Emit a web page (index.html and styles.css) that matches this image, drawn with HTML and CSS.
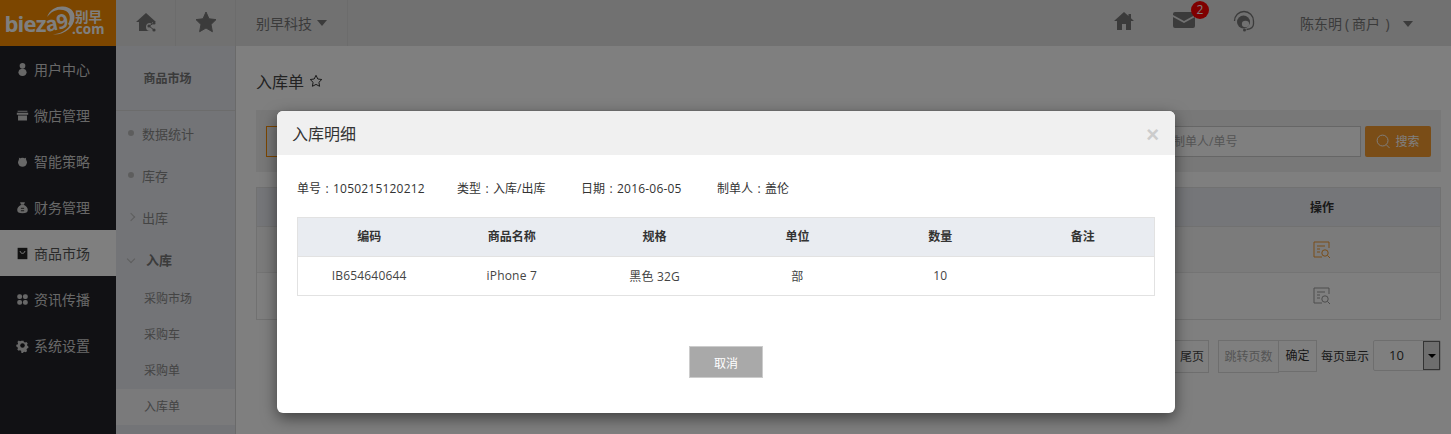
FILE: index.html
```html
<!DOCTYPE html>
<html lang="zh-CN">
<head>
<meta charset="utf-8">
<title>入库单</title>
<link rel="stylesheet" href="styles.css">
</head>
<body>
<div class="app">
  <aside class="nav">
    <div class="logo">
      <svg width="116" height="46" viewBox="0 0 116 46">
        <text x="4.500" y="32" class="logo-main">biez</text>
        <path d="M47 17C50 9 57 6 63 6.500C70 7 75 11 74.500 18C74 27 65 35 53 34.500C60 33.500 66 31 69.500 25.500L68 24C70.500 20 71 14 66 11C60 8 52 10 47 17Z" fill="#fff"/>
        <text x="47" y="32" class="logo-a9" transform="rotate(-12 47 32)">a9</text>
        <text x="75" y="22" class="logo-cn">别早</text>
        <text x="72" y="33.500" class="logo-com">.com</text>
      </svg>
    </div>
    <a class="nav-item"><svg class="nav-ico" viewBox="0 0 16 16"><circle cx="8" cy="3.500" r="3.500"/><path d="M3 11.500C3 8 5.500 7 8 7s5 1 5 4.500c0 3-2 4.500-5 4.500s-5-1.500-5-4.500z"/></svg>用户中心</a>
    <a class="nav-item"><svg class="nav-ico" viewBox="0 0 16 16"><path d="M2 2h12v1.500H2zM1 4.500h14V7H1zM2.500 8h11v6h-11z"/></svg>微店管理</a>
    <a class="nav-item"><svg class="nav-ico" viewBox="0 0 16 16"><circle cx="8" cy="9" r="5.500"/><path d="M3.500 3l2.500 2-2 1.500zM12.500 3L10 5l2 1.500z"/></svg>智能策略</a>
    <a class="nav-item"><svg class="nav-ico" viewBox="0 0 16 16"><path d="M5 1.500h6L9.800 4.500H6.200zM6 5h4c3 1.500 4.500 3.500 4.500 6 0 3-2 4-6.500 4s-6.500-1-6.500-4c0-2.500 1.500-4.500 4.500-6z"/><path d="M6 9h4M6 12h4" stroke="#111" fill="none"/></svg>财务管理</a>
    <a class="nav-item is-active"><svg class="nav-ico" viewBox="0 0 16 16"><path class="bag" d="M2 1h12v14H2z"/><path d="M5 5c.5 2 1.500 2.800 3 2.800S10.500 7 11 5" fill="none" stroke="#fff" stroke-width="1.200"/></svg>商品市场</a>
    <a class="nav-item"><svg class="nav-ico" viewBox="0 0 16 16"><rect x="1.500" y="1.500" width="6" height="6" rx="2.500"/><rect x="8.500" y="1.500" width="6" height="6" rx="2.500"/><rect x="1.500" y="8.500" width="6" height="6" rx="2.500"/><rect x="8.500" y="8.500" width="6" height="6" rx="2.500"/></svg>资讯传播</a>
    <a class="nav-item"><svg class="nav-ico" viewBox="0 0 16 16"><path fill-rule="evenodd" d="M6.500 1h3l.5 2 1.800.8 1.800-1 2 2.200-1 1.700.4 1.800 1.500.8v2.400l-1.900.6-.8 1.800.9 1.700-2 2-1.800-.9-1.700.7-.7 1.900H6.500L6 15.500l-1.800-.7-1.800.9-2-2 1-1.800L.6 10 -1 9.500V7l2-.6.600-1.700-1-1.800 2-2L4.400 2z" transform="translate(1.200 1.200) scale(.85)"/><circle cx="8" cy="8" r="2.800" fill="#1a1a1f"/></svg>系统设置</a>
  </aside>
  <div class="main">
    <header class="topbar">
      <div class="top-cell cell-icon">
        <svg class="top-ico" viewBox="0 0 22 22"><path d="M11 2L1 11h3v9h11a4 4 0 0 1 0-8l2 1v-2h4z"/><circle cx="14" cy="15" r="1.600"/><circle cx="19" cy="12" r="1.600"/><circle cx="19" cy="19" r="1.600"/><path d="M14 15l5-3M14 15l5 4" stroke="#3a3a3a" fill="none"/></svg>
      </div>
      <div class="top-cell cell-icon">
        <svg class="top-ico" viewBox="0 0 22 22"><path d="M11 1l3 6.800 7 .8-5 4.900 1.400 7.200L11 17l-6.400 3.700L6 13.500 1 8.600l7-.8z" stroke-linejoin="round" stroke="#3a3a3a"/></svg>
      </div>
      <div class="top-cell cell-company">别早科技<span class="caret"></span></div>
      <div class="top-right">
        <svg class="ico-home" viewBox="0 0 20 20"><path d="M10 1L0 10h3v9h5v-6h4v6h5v-9h3l-3-2.700V3h-2.500v2z"/></svg>
        <div class="mail">
          <svg class="ico-mail" viewBox="0 0 22 16"><path d="M2 0h18a2 2 0 0 1 2 2v1L11 9 0 3V2a2 2 0 0 1 2-2zM0 5l11 6 11-6v9a2 2 0 0 1-2 2H2a2 2 0 0 1-2-2z"/></svg>
          <span class="badge">2</span>
        </div>
        <svg class="ico-agent" viewBox="0 0 22 22"><path class="agent-line" d="M1.500 11a9.500 9.500 0 0 1 19 0v3c0 3-3 5-7 5.500"/><circle cx="10.500" cy="12" r="6.500"/><ellipse class="agent-face" cx="12.500" cy="14" rx="3.600" ry="3.200"/><circle cx="11.500" cy="20" r="1.500"/></svg>
        <div class="user">陈东明<span class="paren-open">(</span>商户<span class="paren-close">)</span><span class="caret"></span></div>
      </div>
    </header>
    <div class="below">
      <aside class="subnav">
        <div class="sub-title">商品市场</div>
        <div class="sub-row"><span class="dot"></span>数据统计</div>
        <div class="sub-row"><span class="dot"></span>库存</div>
        <div class="sub-row"><span class="chev chev-right"></span>出库</div>
        <div class="sub-row sub-open"><span class="chev chev-down"></span>入库</div>
        <div class="sub-leaf">采购市场</div>
        <div class="sub-leaf">采购车</div>
        <div class="sub-leaf">采购单</div>
        <div class="sub-leaf is-current">入库单</div>
      </aside>
      <main class="content">
        <h1 class="page-title">入库单<svg class="star" viewBox="0 0 14 14"><path d="M7 1.300l1.800 3.700 4 .5-2.900 2.800.7 4L7 10.400 3.400 12.300l.7-4L1.200 5.500l4-.5z"/></svg></h1>
        <div class="filter">
          <div class="filter-btn"></div>
          <div class="search-box">制单人/单号</div>
          <div class="search-btn"><svg class="search-ico" viewBox="0 0 16 16"><circle cx="7" cy="7" r="5.800"/><path d="M11 11.500l3.500 3.500"/></svg>搜索</div>
        </div>
        <div class="grid">
          <div class="grid-head"><span class="grid-op">操作</span></div>
          <div class="grid-row row-alt"><span class="grid-op"><svg class="doc doc-orange" viewBox="0 0 18 18"><path d="M16 7V1H1v15h8M4 5h8M4 8h3M4 11h3"/><circle cx="12" cy="12" r="3.200"/><path d="M14.500 14.500L17 17"/></svg></span></div>
          <div class="grid-row"><span class="grid-op"><svg class="doc" viewBox="0 0 18 18"><path d="M16 7V1H1v15h8M4 5h8M4 8h3M4 11h3"/><circle cx="12" cy="12" r="3.200"/><path d="M14.500 14.500L17 17"/></svg></span></div>
        </div>
        <div class="pager">
          <span class="pg-last">尾页</span>
          <span class="pg-jump">跳转页数</span>
          <span class="pg-ok">确定</span>
          <span class="pg-label">每页显示</span>
          <span class="pg-select"><span class="pg-value">10</span><span class="pg-arrow"><span class="caret caret-dark"></span></span></span>
        </div>
      </main>
    </div>
  </div>
</div>
<div class="backdrop"></div>
<section class="modal">
  <header class="modal-head"><h2 class="modal-title">入库明细</h2><span class="modal-close">×</span></header>
  <div class="modal-body">
    <div class="meta">
      <span class="meta-a">单号<span class="colon">:</span><span class="num">1050215120212</span></span>
      <span class="meta-b">类型<span class="colon">:</span>入库/出库</span>
      <span class="meta-c">日期<span class="colon">:</span><span class="num">2016-06-05</span></span>
      <span>制单人<span class="colon">:</span>盖伦</span>
    </div>
    <table class="detail">
      <thead><tr><th>编码</th><th>商品名称</th><th>规格</th><th>单位</th><th>数量</th><th>备注</th></tr></thead>
      <tbody><tr><td>IB654640644</td><td>iPhone 7</td><td>黑色 32G</td><td>部</td><td>10</td><td></td></tr></tbody>
    </table>
    <div class="modal-foot"><button class="cancel" type="button">取消</button></div>
  </div>
</section>
</body>
</html>
```
FILE: styles.css
```css
* { box-sizing: border-box; }
html, body { margin: 0; height: 100%; overflow: hidden; }
body { font-family: "Open Sans", "Noto Sans CJK SC", sans-serif; font-size: 13px; color: #555; background: #fff; }
.app { display: flex; height: 434px; }
.colon { display: inline-block; width: 12px; text-align: center; }
.num { letter-spacing: .2px; }

.nav { width: 116px; flex: none; background: #222228; }
.logo { height: 46px; background: #f88c00; }
.logo svg { display: block; }
.logo-main { font: bold 22px "Open Sans", sans-serif; fill: #fff; letter-spacing: -.8px; }
.logo-a9 { font: bold 20px "Open Sans", sans-serif; fill: #fff; letter-spacing: -.5px; }
.logo-cn { font: bold 13.500px "Noto Sans CJK SC", sans-serif; fill: #fff; }
.logo-com { font: bold 13.500px "Open Sans", sans-serif; fill: #fff; }
.nav-item { display: flex; align-items: center; height: 46px; padding-left: 16px; gap: 5px; font-size: 14px; color: #d0d0d0; }
.nav-ico { width: 13px; height: 15px; fill: #d0d0d0; flex: none; }
.nav-item.is-active { background: #fff; color: #555; }
.nav-item.is-active .nav-ico { fill: #222; }

.main { flex: 1; min-width: 0; display: flex; flex-direction: column; }
.topbar { height: 46px; flex: none; display: flex; background: #e2e2e2; }
.top-cell { height: 46px; border-right: 1px solid #d8d8d8; display: flex; align-items: center; justify-content: center; }
.cell-icon { width: 60px; }
.top-ico { width: 22px; height: 22px; fill: #777; margin-bottom: 3px; }
.top-ico path[stroke] { stroke: #777; }
.cell-company { width: 112px; font-size: 14px; color: #777; }
.caret { display: inline-block; width: 0; height: 0; margin-left: 5px; border: 5px solid transparent; border-top: 6px solid #777; border-bottom: 0; vertical-align: 2px; }
.top-right { margin-left: auto; display: flex; align-items: center; }
.ico-home { width: 20px; height: 20px; fill: #777; margin: 0 39px 5px 0; }
.mail { position: relative; width: 22px; height: 16px; margin: 0 38px 7px 0; }
.ico-mail { display: block; width: 22px; height: 16px; fill: #777; }
.badge { position: absolute; top: -11px; left: 18px; width: 18px; height: 18px; border-radius: 50%; background: #ff0000; color: #fff; font-size: 12px; line-height: 18px; text-align: center; }
.ico-agent { width: 22px; height: 22px; fill: #777; margin: 0 45px 5px 0; }
.agent-line { fill: none; stroke: #777; stroke-width: 1.300; }
.ico-agent .agent-face { fill: #e2e2e2; }
.user { width: 151px; font-size: 14px; color: #777; white-space: nowrap; }
.paren-open { display: inline-block; width: 10px; text-align: center; }
.paren-close { display: inline-block; width: 15px; text-align: center; }
.user .caret { margin-left: 8px; }

.below { flex: 1; display: flex; min-height: 0; }
.subnav { width: 120px; flex: none; background: #e6e8ee; border-right: 1px solid #d4d4d4; }
.sub-title { height: 65px; border-bottom: 1px solid #d8d8d8; padding-right: 16px; text-align: center; line-height: 65px; font-weight: 700; font-size: 12px; color: #777; }
.sub-row { display: flex; align-items: center; height: 42px; padding-left: 12px; color: #888; font-size: 13px; }
.sub-title + .sub-row { margin-top: 1px; }
.dot { width: 6px; height: 6px; border-radius: 50%; background: #bbb; margin-right: 8px; }
.chev { width: 6px; height: 6px; margin-right: 8px; border-right: 1px solid #bbb; border-bottom: 1px solid #bbb; }
.chev-right { transform: rotate(-45deg); }
.chev-down { transform: rotate(45deg); margin-right: 12px; }
.sub-open { font-weight: 700; color: #777; }
.sub-leaf { height: 36px; padding-left: 28px; line-height: 36px; font-size: 12px; color: #888; }
.sub-open + .sub-leaf { margin-top: 1px; }
.is-current { background: #f4f4f6; }

.content { flex: 1; min-width: 0; padding: 0 10px 0 20px; background: #fff; }
.page-title { margin: 0; height: 64px; display: flex; align-items: center; font-size: 16px; font-weight: 400; color: #444; padding-top: 5px; }
.star { width: 14px; height: 14px; margin-left: 5px; fill: none; stroke: #333; }
.filter { height: 62px; background: #f0f0f0; display: flex; align-items: center; padding: 0 10px; }
.filter-btn { width: 100px; height: 31px; border: 1px solid #f88c00; }
.search-box { margin-left: auto; width: 280px; height: 31px; border: 1px solid #ccc; background: #fff; line-height: 30px; padding-left: 91px; color: #aaa; font-size: 12px; white-space: nowrap; }
.search-btn { margin-left: 4px; width: 66px; height: 31px; border-radius: 2px; background: #f59a2e; color: #fff; display: flex; align-items: center; justify-content: center; gap: 4px; font-size: 12px; }
.search-ico { width: 15px; height: 15px; fill: none; stroke: #fff; }
.grid { margin-top: 15px; border: 1px solid #e2e2e2; }
.grid-head { height: 39px; background: #eaecf2; border-bottom: 1px solid #e2e2e2; display: flex; justify-content: flex-end; align-items: center; font-weight: 700; font-size: 12px; color: #333; }
.grid-row { height: 46px; display: flex; justify-content: flex-end; align-items: center; border-bottom: 1px solid #e8e8e8; }
.grid-row:last-child { border-bottom: 0; }
.row-alt { background: #f6f6f6; }
.grid-op { width: 236px; text-align: center; }
.doc { display: block; margin: 0 auto; width: 18px; height: 18px; fill: none; stroke: #999; }
.doc-orange { stroke: #f59a2e; }
.pager { margin-top: 20px; display: flex; justify-content: flex-end; align-items: flex-start; color: #333; font-size: 12px; }
.pg-last { width: 40px; height: 33px; line-height: 31px; border: 1px solid #ddd; border-left: 0; text-align: right; padding-right: 4px; font-size: 12px; color: #444; }
.pg-jump { margin-left: 9px; width: 61px; height: 33px; line-height: 31px; border: 1px solid #ddd; text-align: center; color: #aaa; font-size: 12px; }
.pg-ok { width: 38px; height: 32px; line-height: 30px; border: 1px solid #ddd; border-left: 0; text-align: center; }
.pg-label { margin-left: 4px; width: 52px; line-height: 34px; }
.pg-select { width: 68px; height: 31px; border: 1px solid #ddd; border-radius: 2px; display: flex; justify-content: space-between; padding: 0 0 0 15px; line-height: 29px; font-size: 13px; }
.pg-arrow { width: 17px; height: 29px; background: #ddd; border: 1px solid #666; display: flex; align-items: center; justify-content: center; }
.caret-dark { margin: 0; border-top-color: #000; border-width: 4px; border-top-width: 4px; border-bottom: 0; }

.backdrop { position: absolute; inset: 0; background: rgba(0, 0, 0, .5); }
.modal { position: absolute; left: 277px; top: 111px; width: 898px; height: 302px; background: #fff; border-radius: 6px; overflow: hidden; box-shadow: 0 5px 15px rgba(0, 0, 0, .5); }
.modal-head { height: 44px; background: #f0f0f0; display: flex; align-items: center; justify-content: space-between; padding: 0 16px 0 15px; }
.modal-title { margin: 0; font-size: 16px; font-weight: 400; color: #333; }
.modal-close { font-size: 22px; font-weight: 700; color: #ccc; line-height: 1; padding-top: 3px; font-family: "Liberation Sans", sans-serif; }
.modal-body { padding: 25px 20px 0; }
.meta { height: 37px; display: flex; align-items: flex-start; font-size: 12px; color: #333; line-height: 18px; }
.meta-a { width: 160px; }
.meta-b { width: 124px; }
.meta-c { width: 136px; }
.detail { width: 858px; table-layout: fixed; border-collapse: collapse; font-size: 12px; color: #444; }
.detail th, .detail td { height: 39px; padding: 0; text-align: center; border-top: 1px solid #e2e2e2; border-bottom: 1px solid #e2e2e2; }
.detail td { padding-bottom: 1px; letter-spacing: .2px; }
.detail th { padding-bottom: 2px; background: #e9ecf1; font-weight: 700; color: #333; }
.detail th:first-child, .detail td:first-child { border-left: 1px solid #e2e2e2; }
.detail th:last-child, .detail td:last-child { border-right: 1px solid #e2e2e2; }
.modal-foot { margin-top: 50px; padding-left: 392px; }
.cancel { display: block; width: 74px; height: 32px; background: #a9a9a9; border: 1px solid #ccc; color: #fff; font: 12px "Noto Sans CJK SC", sans-serif; }
```
